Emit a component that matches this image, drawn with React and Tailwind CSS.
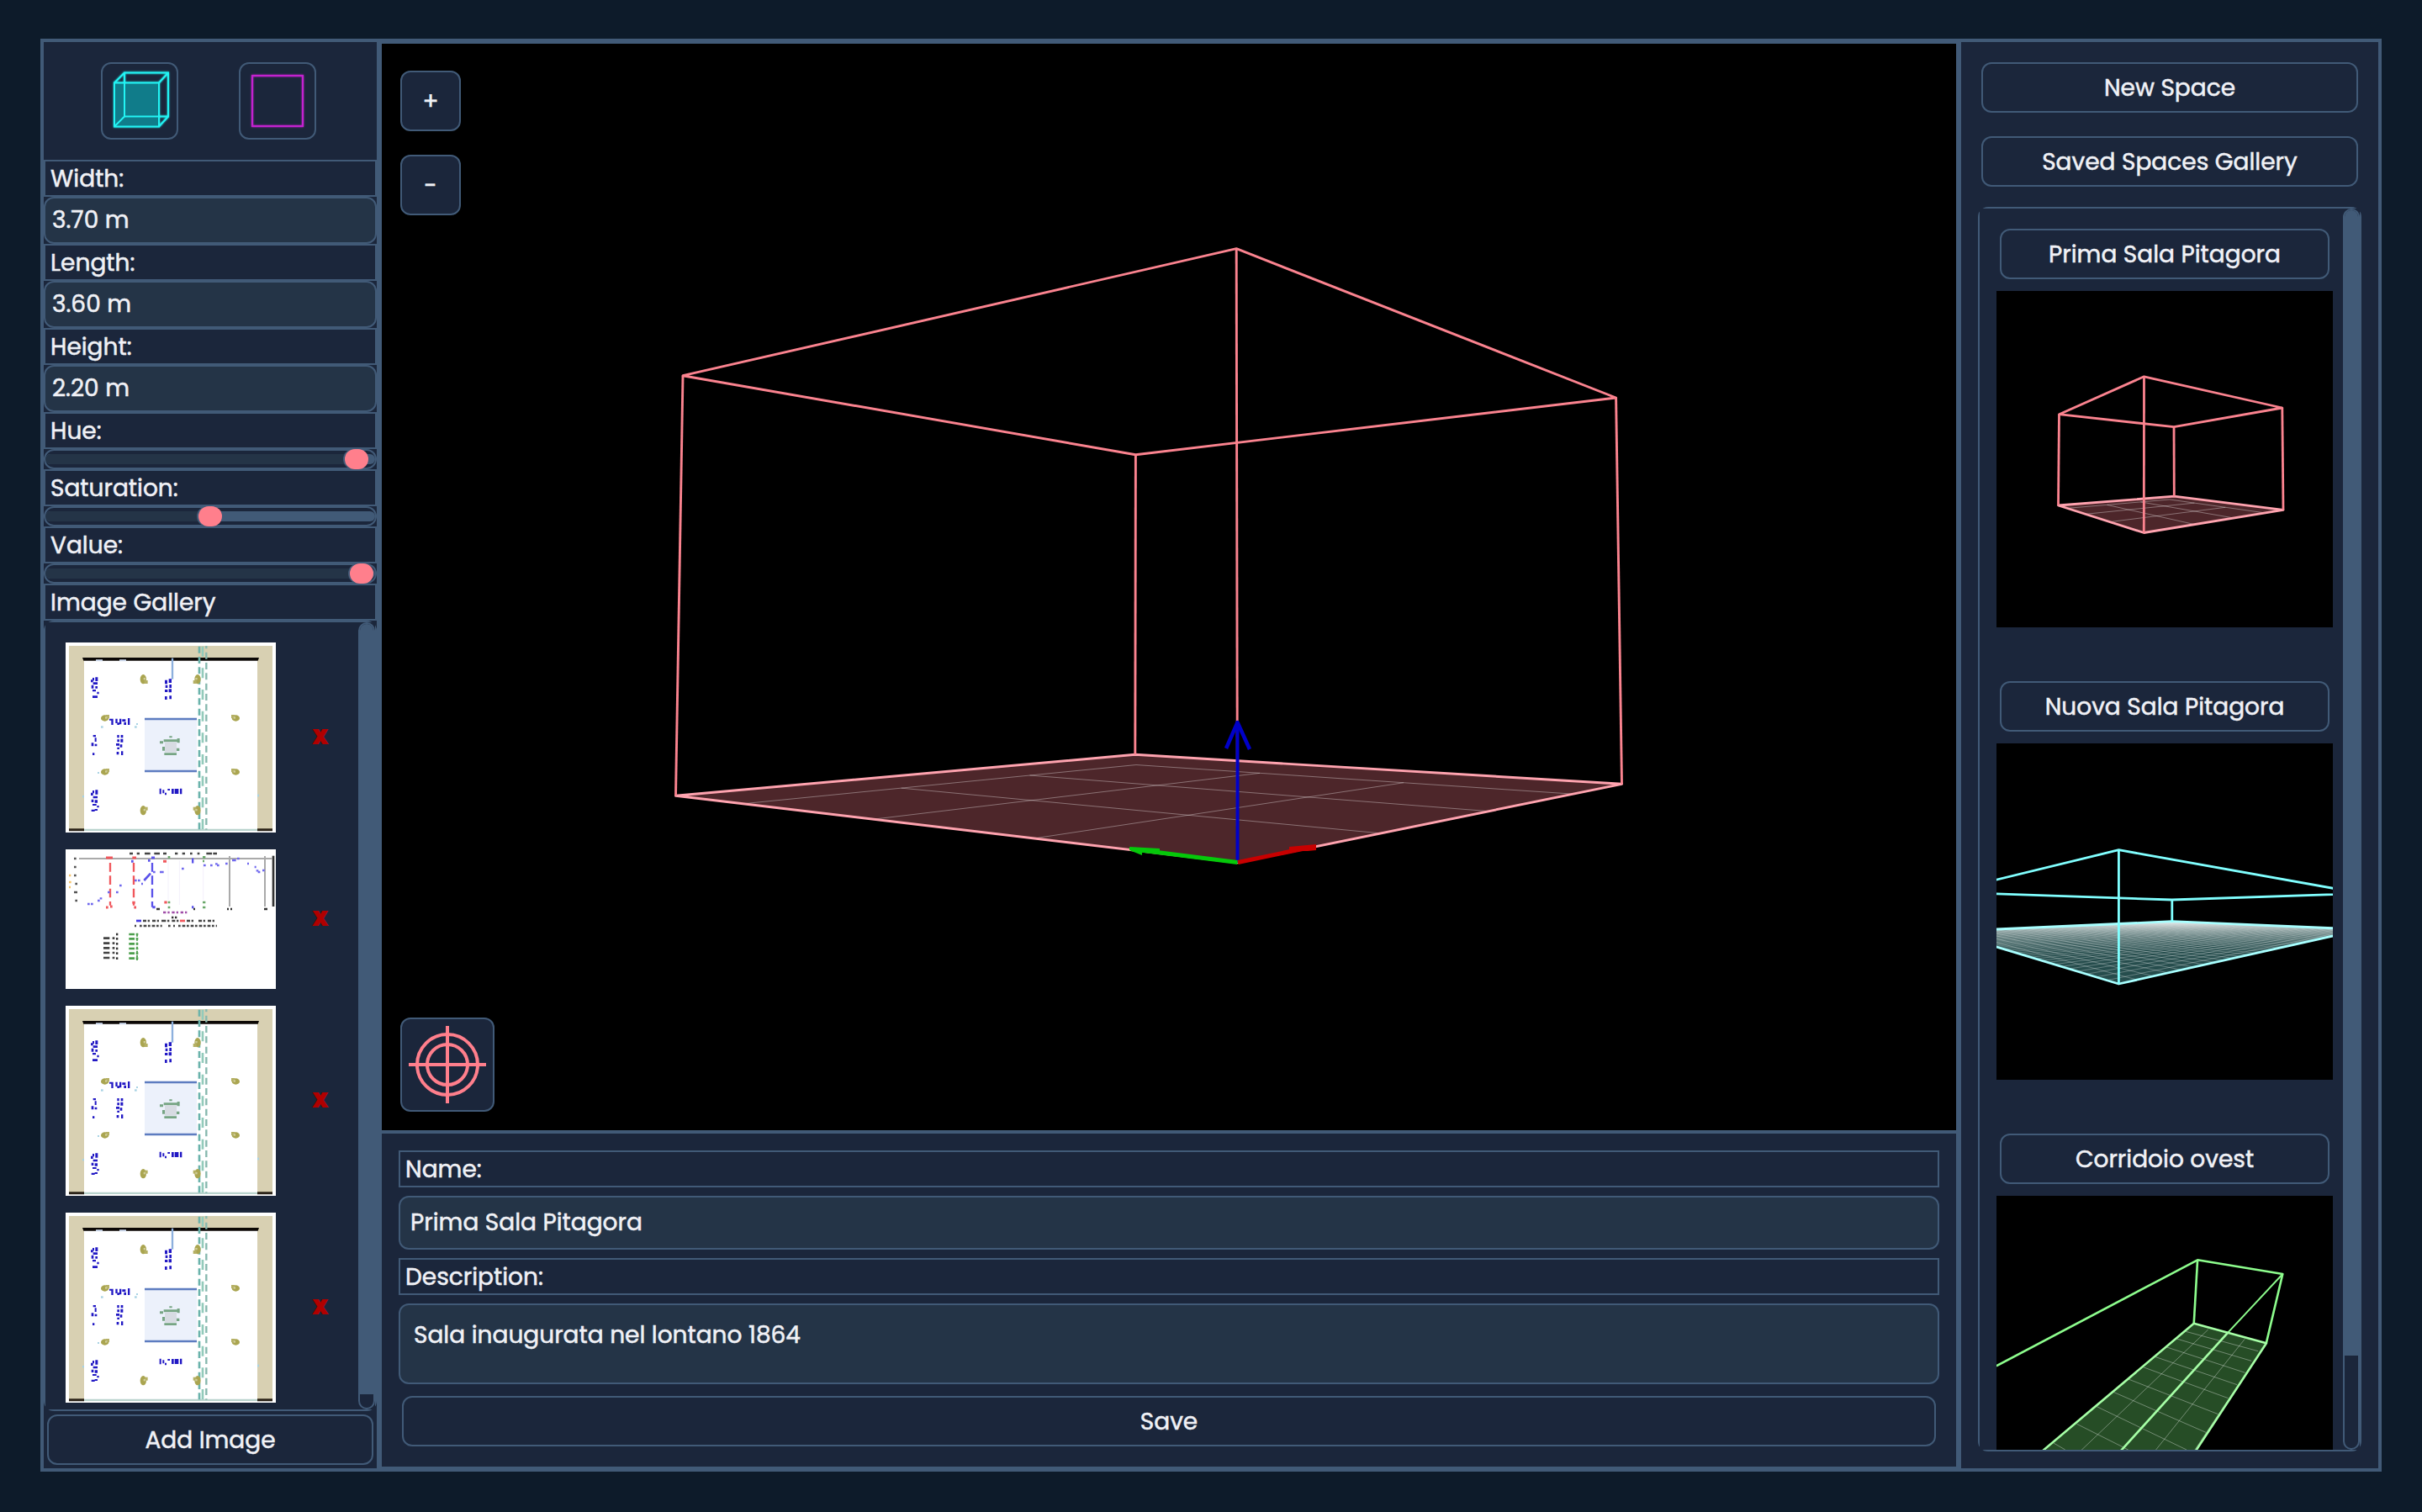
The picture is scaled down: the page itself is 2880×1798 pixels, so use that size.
import React from "react";

const BOX =
  "flex items-center justify-center border-2 border-[#415a77] bg-[#1b263b] rounded-xl";
const BTN =
  "flex items-center justify-center border-2 border-[#415a77] bg-[#1b263b] rounded-xl pt-0.5";

function solveSquareToQuad([p0, p1, p2, p3]) {
  const [x0, y0] = p0, [x1, y1] = p1, [x2, y2] = p2, [x3, y3] = p3;
  const dx1 = x1 - x2, dx2 = x3 - x2, sx = x0 - x1 + x2 - x3;
  const dy1 = y1 - y2, dy2 = y3 - y2, sy = y0 - y1 + y2 - y3;
  const det = dx1 * dy2 - dx2 * dy1;
  const g = (sx * dy2 - dx2 * sy) / det;
  const h = (dx1 * sy - sx * dy1) / det;
  return (u, v) => {
    const w = g * u + h * v + 1;
    return [
      ((x1 - x0 + g * x1) * u + (x3 - x0 + h * x3) * v + x0) / w,
      ((y1 - y0 + g * y1) * u + (y3 - y0 + h * y3) * v + y0) / w,
    ];
  };
}

/* Floor corners go front, right, back, left; ceiling corners the same. */
function Room({ floor, ceil, w, l, stroke, line, edge, fill, gridWidth = 1, gridOpacity = 0.35 }) {
  const at = solveSquareToQuad(floor);
  const W = Math.floor(w), L = Math.floor(l);
  let grid = "";
  for (let i = 1; i <= W; i++) {
    grid += "M" + at(i / w, 0).join(" ") + "L" + at(i / w, L / l).join(" ");
  }
  for (let j = 1; j <= L; j++) {
    grid += "M" + at(0, j / l).join(" ") + "L" + at(W / w, j / l).join(" ");
  }
  const poly = (pts) => pts.map((p) => p.join(",")).join(" ");
  return (
    <g fill="none" strokeLinejoin="round">
      <polygon points={poly(floor)} fill={fill} />
      <g opacity={gridOpacity}>
        <path d={grid} stroke="#fff" strokeWidth={gridWidth} />
      </g>
      <polygon points={poly(ceil)} stroke={line} strokeWidth={stroke} />
      <polygon points={poly(floor)} stroke={edge} strokeWidth={stroke} />
      {floor.map((p, i) => (
        <path key={i} d={`M${p.join(" ")}L${ceil[i].join(" ")}`} stroke={line} strokeWidth={stroke} />
      ))}
    </g>
  );
}

function MainScene() {
  return (
    <svg className="block h-full w-full" viewBox="454 52 1872 1292">
      <Room
        floor={[[1471.5, 1025.7], [1928.5, 932.3], [1349.8, 897.3], [803.5, 946.3]]}
        ceil={[[1470.2, 295.7], [1921.6, 473], [1350.4, 540.7], [812, 446.7]]}
        w={3.7} l={3.6} stroke={2.9} line="#fb838f" edge="#ffa3af" fill="#4d262a"
      />
      <g fill="none" stroke="#0000c8" strokeWidth="4">
        <path d="M1471.5 1026V859" />
        <path d="M1458 890L1471.5 859L1486 891" strokeWidth="4.5" strokeLinejoin="round" />
      </g>
      <path d="M1471.5 1025.5L1356 1011" stroke="#05c80a" strokeWidth="5" />
      <path d="M1343 1007L1379 1009V1014H1358V1017L1343 1011Z" fill="#05c80a" />
      <path d="M1472 1025.5L1556 1008" stroke="#c80000" strokeWidth="5" />
      <path d="M1533 1007L1565 1004V1011L1555 1012L1533 1012Z" fill="#c80000" />
    </svg>
  );
}

function ThumbPrima() {
  return (
    <svg className="block h-full w-full" viewBox="0 0 400 400">
      <Room
        floor={[[175.3, 287.5], [341, 260.3], [211.3, 244.2], [73.5, 255]]}
        ceil={[[175.5, 101.8], [339.8, 139], [211, 161.7], [74.5, 146.7]]}
        w={3.7} l={3.6} stroke={2.8} line="#fb838f" edge="#ffa3af" fill="#4d262a"
      />
    </svg>
  );
}

function ThumbNuova() {
  return (
    <svg className="block h-full w-full" viewBox="0 0 400 400">
      <Room
        floor={[[145.4, 286], [435, 221.2], [208.8, 211.7], [-60.4, 223.7]]}
        ceil={[[145.4, 126.7], [435, 178.5], [208.8, 186], [-60.4, 176.8]]}
        w={46} l={46} stroke={2.8} line="#80ffff" edge="#a8ffff" fill="#264d4d"
        gridWidth={0.8} gridOpacity={0.36}
      />
    </svg>
  );
}

function ThumbCorridoio() {
  return (
    <svg className="block h-full w-full" viewBox="0 0 400 400">
      <g transform="translate(-114 -122) scale(0.3954 0.33333)" fill="none">
        <path d="M882 821L1100 892L724 1572H131Z" fill="#264d26" />
        <g stroke="#fff" strokeOpacity="0.35">
          {[
            "M925 843L279 1572", "M1035 877L565 1572", "M1095 900L885 1272",
            "M858 850L1075 920", "M830 876L1055 955", "M798 905L1036 997",
            "M765 940L1012 1040", "M727 976L985 1088", "M685 1020L955 1145",
            "M640 1066L918 1210", "M590 1118L860 1272", "M530 1180L668 1262L760 1320",
            "M460 1248L495 1272",
          ].map((d) => <path key={d} d={d} vectorEffect="non-scaling-stroke" />)}
        </g>
        <g stroke="#8dfd8d" strokeWidth="2.6" strokeLinejoin="round">
          <path vectorEffect="non-scaling-stroke" d="M288 973L893 595L1149 645L1100 890" />
          <path vectorEffect="non-scaling-stroke" d="M893 595L882 821" />
          <path vectorEffect="non-scaling-stroke" strokeWidth="2" d="M1149 645L985 853" />
        </g>
        <g stroke="#a6ffa6" strokeWidth="2.6" strokeLinejoin="round">
          <path vectorEffect="non-scaling-stroke" d="M985 853L436 1572" />
          <path vectorEffect="non-scaling-stroke" d="M131 1572L882 821L1100 892L724 1572" />
        </g>
      </g>
    </svg>
  );
}

const PLAN_TREES = [
  [331, 203], [525, 203], [194, 342], [661, 342], [194, 534], [661, 534], [331, 671], [525, 671],
];
const PLAN_MARKS =
  "M150 198h6v10h-6zM160 196h9v14h-9zM144 205h8v9h-8zM152 214h16v8h-16zM146 224h8v12h-8zM160 228h8v8h-8zM150 240h12v7h-12zM166 248h7v8h-7zM150 262h18v8h-18z" +
  "M408 206h9v14h-9zM422 202h10v14h-10zM410 224h8v10h-8zM424 222h8v12h-8zM408 240h10v9h-10zM422 238h10v12h-10zM408 264h8v12h-8zM424 262h8v12h-8z" +
  "M210 344h14v6h-14zM217 344h7v22h-7zM232 344h7v16h-7zM238 358h8v8h-8zM246 344h7v20h-7zM256 346h12v8h-12zM262 356h8v10h-8zM276 342h7v24h-7z" +
  "M152 402h10v7h-10zM158 412h6v14h-6zM146 430h8v12h-8zM158 434h8v8h-8zM150 466h7v8h-7z" +
  "M238 402h7v10h-7zM251 402h8v10h-8zM238 418h8v9h-8zM250 416h9v12h-9zM234 432h12v8h-12zM248 436h8v10h-8zM238 446h8v7h-8zM236 462h8v10h-8zM252 460h7v14h-7z" +
  "M389 593h6v20h-6zM400 598h6v12h-6zM408 608h6v8h-6zM418 594h8v6h-8zM432 594h8v18h-8zM443 594h14v18h-14zM462 593h7v20h-7z" +
  "M150 600h6v10h-6zM160 598h9v16h-9zM144 608h8v10h-8zM152 620h16v8h-16zM146 632h8v10h-8zM158 634h10v10h-10zM150 648h14v6h-14zM166 654h7v7h-7zM146 668h12v7h-12zM158 666h10v6h-10z";

function FloorPlan() {
  return (
    <svg className="block h-[226px] w-[250px] shrink-0 bg-white" viewBox="54 72 750 678">
      <path d="M66 84H792V744H738V130H120V744H66Z" fill="#d8d0b2" />
      <path d="M114 126H744L740 137H118Z" fill="#0c0806" />
      <path d="M162 133h24v6h-24zM246 133h24v6h-24z" fill="#cfdcf0" />
      <path d="M66 736h54v9h-54zM738 736h54v9h-54z" fill="#2b2318" />
      <path d="M120 737h618v7h-618z" fill="#b9d3cd" />
      <path d="M435 128V203" stroke="#8db0dd" strokeWidth="7" />
      <rect x="336" y="342" width="186" height="192" fill="#ecf1fb" />
      <path d="M336 345H522M336 531H522" stroke="#5d7cc0" strokeWidth="8" />
      <g fill="#77a584">
        <path d="M390 424h12v9h-12zM399 444h10v14h-10zM404 418h50v9h-50zM424 406h10v6h-10zM452 414h9v16h-9zM449 449h11v10h-11zM406 466h44v8h-44z" />
        <rect x="408" y="427" width="42" height="37" fill="#d7dbe2" />
      </g>
      <path d="M531 86V740" stroke="#6ab3ab" strokeWidth="8" strokeDasharray="24 13" />
      <path d="M556 84V740" stroke="#86b8ae" strokeWidth="7" strokeDasharray="24 13" strokeDashoffset="14" />
      <path d="M543 86V740" stroke="#93cbbb" strokeWidth="8" strokeDasharray="36 41" />
      {PLAN_TREES.map(([x, y], i) => {
        const tall = i < 2 || i > 5;
        const dir = i === 0 || i === 2 || i === 4 || i === 6 ? 1 : -1;
        return (
          <g key={i}>
            <ellipse cx={x} cy={y} rx={tall ? 11 : 14} ry={tall ? 17 : 11} fill="#aaa550" />
            <rect
              x={x + (dir > 0 ? 4 : -16)} y={y + (i < 2 ? 4 : -12)}
              width="12" height="12" fill="#b5b064"
            />
            <rect x={x + (dir > 0 ? 1 : -8)} y={y - 5} width="7" height="7" fill="#cfcc98" />
          </g>
        );
      })}
      <path d={PLAN_MARKS} fill="#2118c4" />
      <g fill="#a9d3e4">
        <rect x="180" y="370" width="8" height="7" />
        <rect x="300" y="370" width="8" height="7" />
        <rect x="306" y="360" width="6" height="6" />
        <rect x="168" y="534" width="6" height="6" />
        <rect x="114" y="618" width="6" height="7" />
        <rect x="738" y="614" width="6" height="8" />
      </g>
    </svg>
  );
}

function Section() {
  const rows = [1113, 1129, 1147, 1164, 1181, 1199];
  return (
    <svg className="block h-[166px] w-[250px] shrink-0 bg-white" viewBox="54 810 750 498" fill="none">
      <path d="M102 843H790" stroke="#aaa" strokeWidth="6" />
      <path d="M639 834V1014M765 834V1014" stroke="#aaa" strokeWidth="6" />
      <path d="M795 833V1014" stroke="#333" strokeWidth="8" />
      <path d="M213 858V1010M297 858V1010" stroke="#f0575c" strokeWidth="7" strokeDasharray="32 14" />
      <path d="M363 858V1016" stroke="#5a52ea" strokeWidth="7" strokeDasharray="32 14" />
      <path d="M460 850V1008M420 850V990M545 860V990" stroke="#f3f0fb" strokeWidth="3" />
      <path d="M282 825h12M308 825h10M336 825h20M370 825h20M402 825h12M444 825h10M470 825h10M498 825h8M524 825h8M556 825h20M580 825h14" stroke="#444" strokeWidth="8" />
      <path d="M198 840h24M292 840h14M402 853h12M198 1017h8M213 1014h8M292 1000h10M298 1017h8M406 999h10" stroke="#f0575c" strokeWidth="9" />
      <path d="M288 853h8M348 850h8M360 840h12M364 1016h10M504 846h7M504 855h7M504 1016h7" stroke="#5a52ea" strokeWidth="9" />
      <path d="M419 838h8M543 838h10M543 852h6M419 999h8M419 1017h8M543 999h10M543 1017h10" stroke="#6aa86a" strokeWidth="8" />
      <path d="M132 1005h8M144 1005h8M168 993h8M176 985h8M204 963h8M234 963h8M246 939h8M300 921h8M312 921h8M324 933h6M390 891h14M366 891h8M468 879h8M546 867h8M570 867h8M588 862h8M594 867h8M624 861h8M648 849h14M666 843h8M702 861h6M728 873h6M734 886h8M740 891h8M756 885h8" stroke="#6f68ee" strokeWidth="7" />
      <path d="M334 921L357 896" stroke="#5a52ea" strokeWidth="8" />
      <path d="M66 903h7M66 927h8M66 945h6" stroke="#f6c469" strokeWidth="8" />
      <path d="M84 843h8M84 873h8M84 903h8M88 933h8M84 963h12M88 993h8" stroke="#555" strokeWidth="7" />
      <path d="M378 1023h12M630 1023h6M642 1023h6M762 1023h12M510 1023h6M432 1053h7M444 1053h7" stroke="#333" strokeWidth="7" />
      <path d="M402 1035h92" stroke="#a04da8" strokeWidth="7" strokeDasharray="10 6 7 8" />
      <path d="M306 1065h18" stroke="#4238e0" strokeWidth="8" />
      <path d="M330 1065h70M400 1065h60M486 1065h32M528 1065h60" stroke="#444" strokeWidth="7" strokeDasharray="12 5 7 9" />
      <path d="M462 1065h18" stroke="#f0575c" strokeWidth="8" />
      <path d="M300 1083h6M318 1083h80M420 1083h8M438 1083h6M456 1083h138" stroke="#444" strokeWidth="7" strokeDasharray="8 6 11 5" />
      {rows.map((y, i) => (
        <g key={y} strokeWidth="8">
          {i > 0 && <path d={`M189 ${y - 2}h22M221 ${y - 2}h8`} stroke="#444" />}
          <path d={`M234 ${y}h7`} stroke="#333" />
          <path d={`M280 ${y}h20M305 ${y}h8`} stroke="#4d9f4d" />
        </g>
      ))}
      <path d="M309 1112V1206" stroke="#55a455" strokeWidth="6" strokeDasharray="9 6" />
    </svg>
  );
}

const Label = ({ children }) => (
  <div className="flex h-11 shrink-0 items-center border-2 border-[#415a77] px-1.5 pt-0.5">{children}</div>
);

const Field = ({ label, value }) => (
  <>
    <Label>{label}</Label>
    <div className="flex h-14 shrink-0 items-center rounded-xl border-2 border-[#415a77] bg-[#243447] px-2">
      {value}
    </div>
  </>
);

const Slider = ({ label, left }) => (
  <>
    <Label>{label}</Label>
    <div className="relative flex h-6 shrink-0 items-center rounded-xl border-2 border-[#415a77]">
      <div className="flex h-3 w-full overflow-hidden rounded-md bg-[#415a77]">
        <div className="bg-[#243447]" style={{ width: left + 8 }} />
      </div>
      <div
        className="absolute -top-0.5 h-6 w-7 rounded-xl bg-[#ff7f8c] shadow-[-2px_0_0_#415a77]"
        style={{ left }}
      />
    </div>
  </>
);

const GalleryRow = ({ children }) => (
  <div className="flex items-center">
    {children}
    <div className="flex flex-1 justify-center pb-1 pl-2">
      <span className="font-['Open_Sans'] text-[22px] leading-none font-extrabold text-[#b00000] [-webkit-text-stroke:2px_#b00000]">X</span>
    </div>
  </div>
);

const Saved = ({ name, children }) => (
  <div className="mb-16 flex w-[400px] shrink-0 flex-col items-center gap-3.5">
    <div className={`${BTN} h-[60px] w-[392px]`}>{name}</div>
    <div className="h-[400px] w-[400px] bg-black">{children}</div>
  </div>
);

export default function App() {
  return (
    <div className="h-[1798px] w-[2880px] overflow-hidden bg-[#0d1b2a] px-12 pt-[46px] pb-12 font-['Poppins','Inter',sans-serif] text-[28px] leading-9 font-normal text-[#f0f1f6] [-webkit-text-stroke:0.5px_#f0f1f6] [font-feature-settings:'cv11']">
      <div className="flex h-full border-4 border-[#415a77] bg-[#1b263b]">
        <aside className="flex w-[396px] shrink-0 flex-col">
          <div className="flex h-[140px] shrink-0 gap-[72px] pt-6 pl-[68px]">
            <div className={`${BOX} h-[92px] w-[92px]`}>
              <svg className="h-[88px] w-[88px] drop-shadow-[0_0_1px_#22f0f0]" viewBox="122 75.5 88 88" fill="none" stroke="#22f4f4" strokeWidth="2">
                <rect x="136" y="98" width="53" height="52" fill="#107c8a" />
                <rect x="148" y="86" width="52" height="52" />
                <path d="M136 98L148 86M189 98L200 86M136 150L148 138M189 150L200 138" />
              </svg>
            </div>
            <div className={`${BOX} h-[92px] w-[92px]`}>
              <div className="h-[62px] w-[62px] border-2 border-[#c322cf] drop-shadow-[0_0_1px_#c322cf]" />
            </div>
          </div>
          <Field label="Width:" value="3.70 m" />
          <Field label="Length:" value="3.60 m" />
          <Field label="Height:" value="2.20 m" />
          <Slider label="Hue:" left={356} />
          <Slider label="Saturation:" left={182} />
          <Slider label="Value:" left={362} />
          <Label>Image Gallery</Label>
          <div className="flex h-[940px] shrink-0 rounded-xl border-2 border-[#415a77]">
            <div className="flex flex-1 flex-col gap-5 bg-[#1b263b] pt-6 pl-6">
              <GalleryRow><FloorPlan /></GalleryRow>
              <GalleryRow><Section /></GalleryRow>
              <GalleryRow><FloorPlan /></GalleryRow>
              <GalleryRow><FloorPlan /></GalleryRow>
            </div>
            <div className="shrink-0 bg-[#1b263b]">
              <div className="h-full w-5 overflow-hidden rounded-[10px] border-2 border-[#415a77]">
                <div className="h-[916px] bg-[#415a77]" />
              </div>
            </div>
          </div>
          <div className={`${BTN} mx-1 mt-1 h-[60px] shrink-0`}>Add Image</div>
        </aside>

        <main className="flex w-[1884px] shrink-0 flex-col border-x-[6px] border-y-2 border-[#415a77]">
          <div className="relative h-[1292px] shrink-0 bg-black">
            <MainScene />
            <div className="absolute top-8 left-[22px] flex flex-col gap-7">
              <div className={`${BTN} h-[72px] w-[72px]`}>+</div>
              <div className={`${BTN} h-[72px] w-[72px]`}>-</div>
            </div>
            <div className={`${BOX} absolute bottom-[22px] left-[22px] h-28 w-28`}>
              <svg className="h-[100px] w-[100px]" viewBox="-50 -50 100 100" fill="none" stroke="#ff7f8c" strokeWidth="4">
                <circle r="36" />
                <circle r="24" />
                <path d="M-46 0H46M0 -46V46" />
              </svg>
            </div>
          </div>
          <div className="flex flex-1 flex-col gap-2.5 border-t-4 border-[#415a77] px-5 pt-5">
            <Label>Name:</Label>
            <div className="flex h-16 shrink-0 items-center rounded-xl border-2 border-[#415a77] bg-[#243447] px-3">
              Prima Sala Pitagora
            </div>
            <Label>Description:</Label>
            <div className="h-24 shrink-0 rounded-xl border-2 border-[#415a77] bg-[#243447] px-4 pt-[18px]">
              Sala inaugurata nel lontano 1864
            </div>
            <div className={`${BTN} mx-1 mt-1 h-[60px] shrink-0`}>Save</div>
          </div>
        </main>

        <aside className="flex flex-1 flex-col px-5 pt-6">
          <div className={`${BTN} mx-1 h-[60px] shrink-0`}>New Space</div>
          <div className={`${BTN} mx-1 mt-7 h-[60px] shrink-0`}>Saved Spaces Gallery</div>
          <div className="mt-6 flex h-[1480px] shrink-0 rounded-xl border-2 border-[#415a77]">
            <div className="flex flex-1 flex-col overflow-hidden bg-[#1b263b] pt-6 pl-5">
              <Saved name="Prima Sala Pitagora"><ThumbPrima /></Saved>
              <Saved name="Nuova Sala Pitagora"><ThumbNuova /></Saved>
              <Saved name="Corridoio ovest"><ThumbCorridoio /></Saved>
            </div>
            <div className="shrink-0 bg-[#1b263b]">
              <div className="h-full w-5 overflow-hidden rounded-[10px] border-2 border-[#415a77]">
                <div className="h-[1362px] bg-[#415a77]" />
              </div>
            </div>
          </div>
        </aside>
      </div>
    </div>
  );
}
